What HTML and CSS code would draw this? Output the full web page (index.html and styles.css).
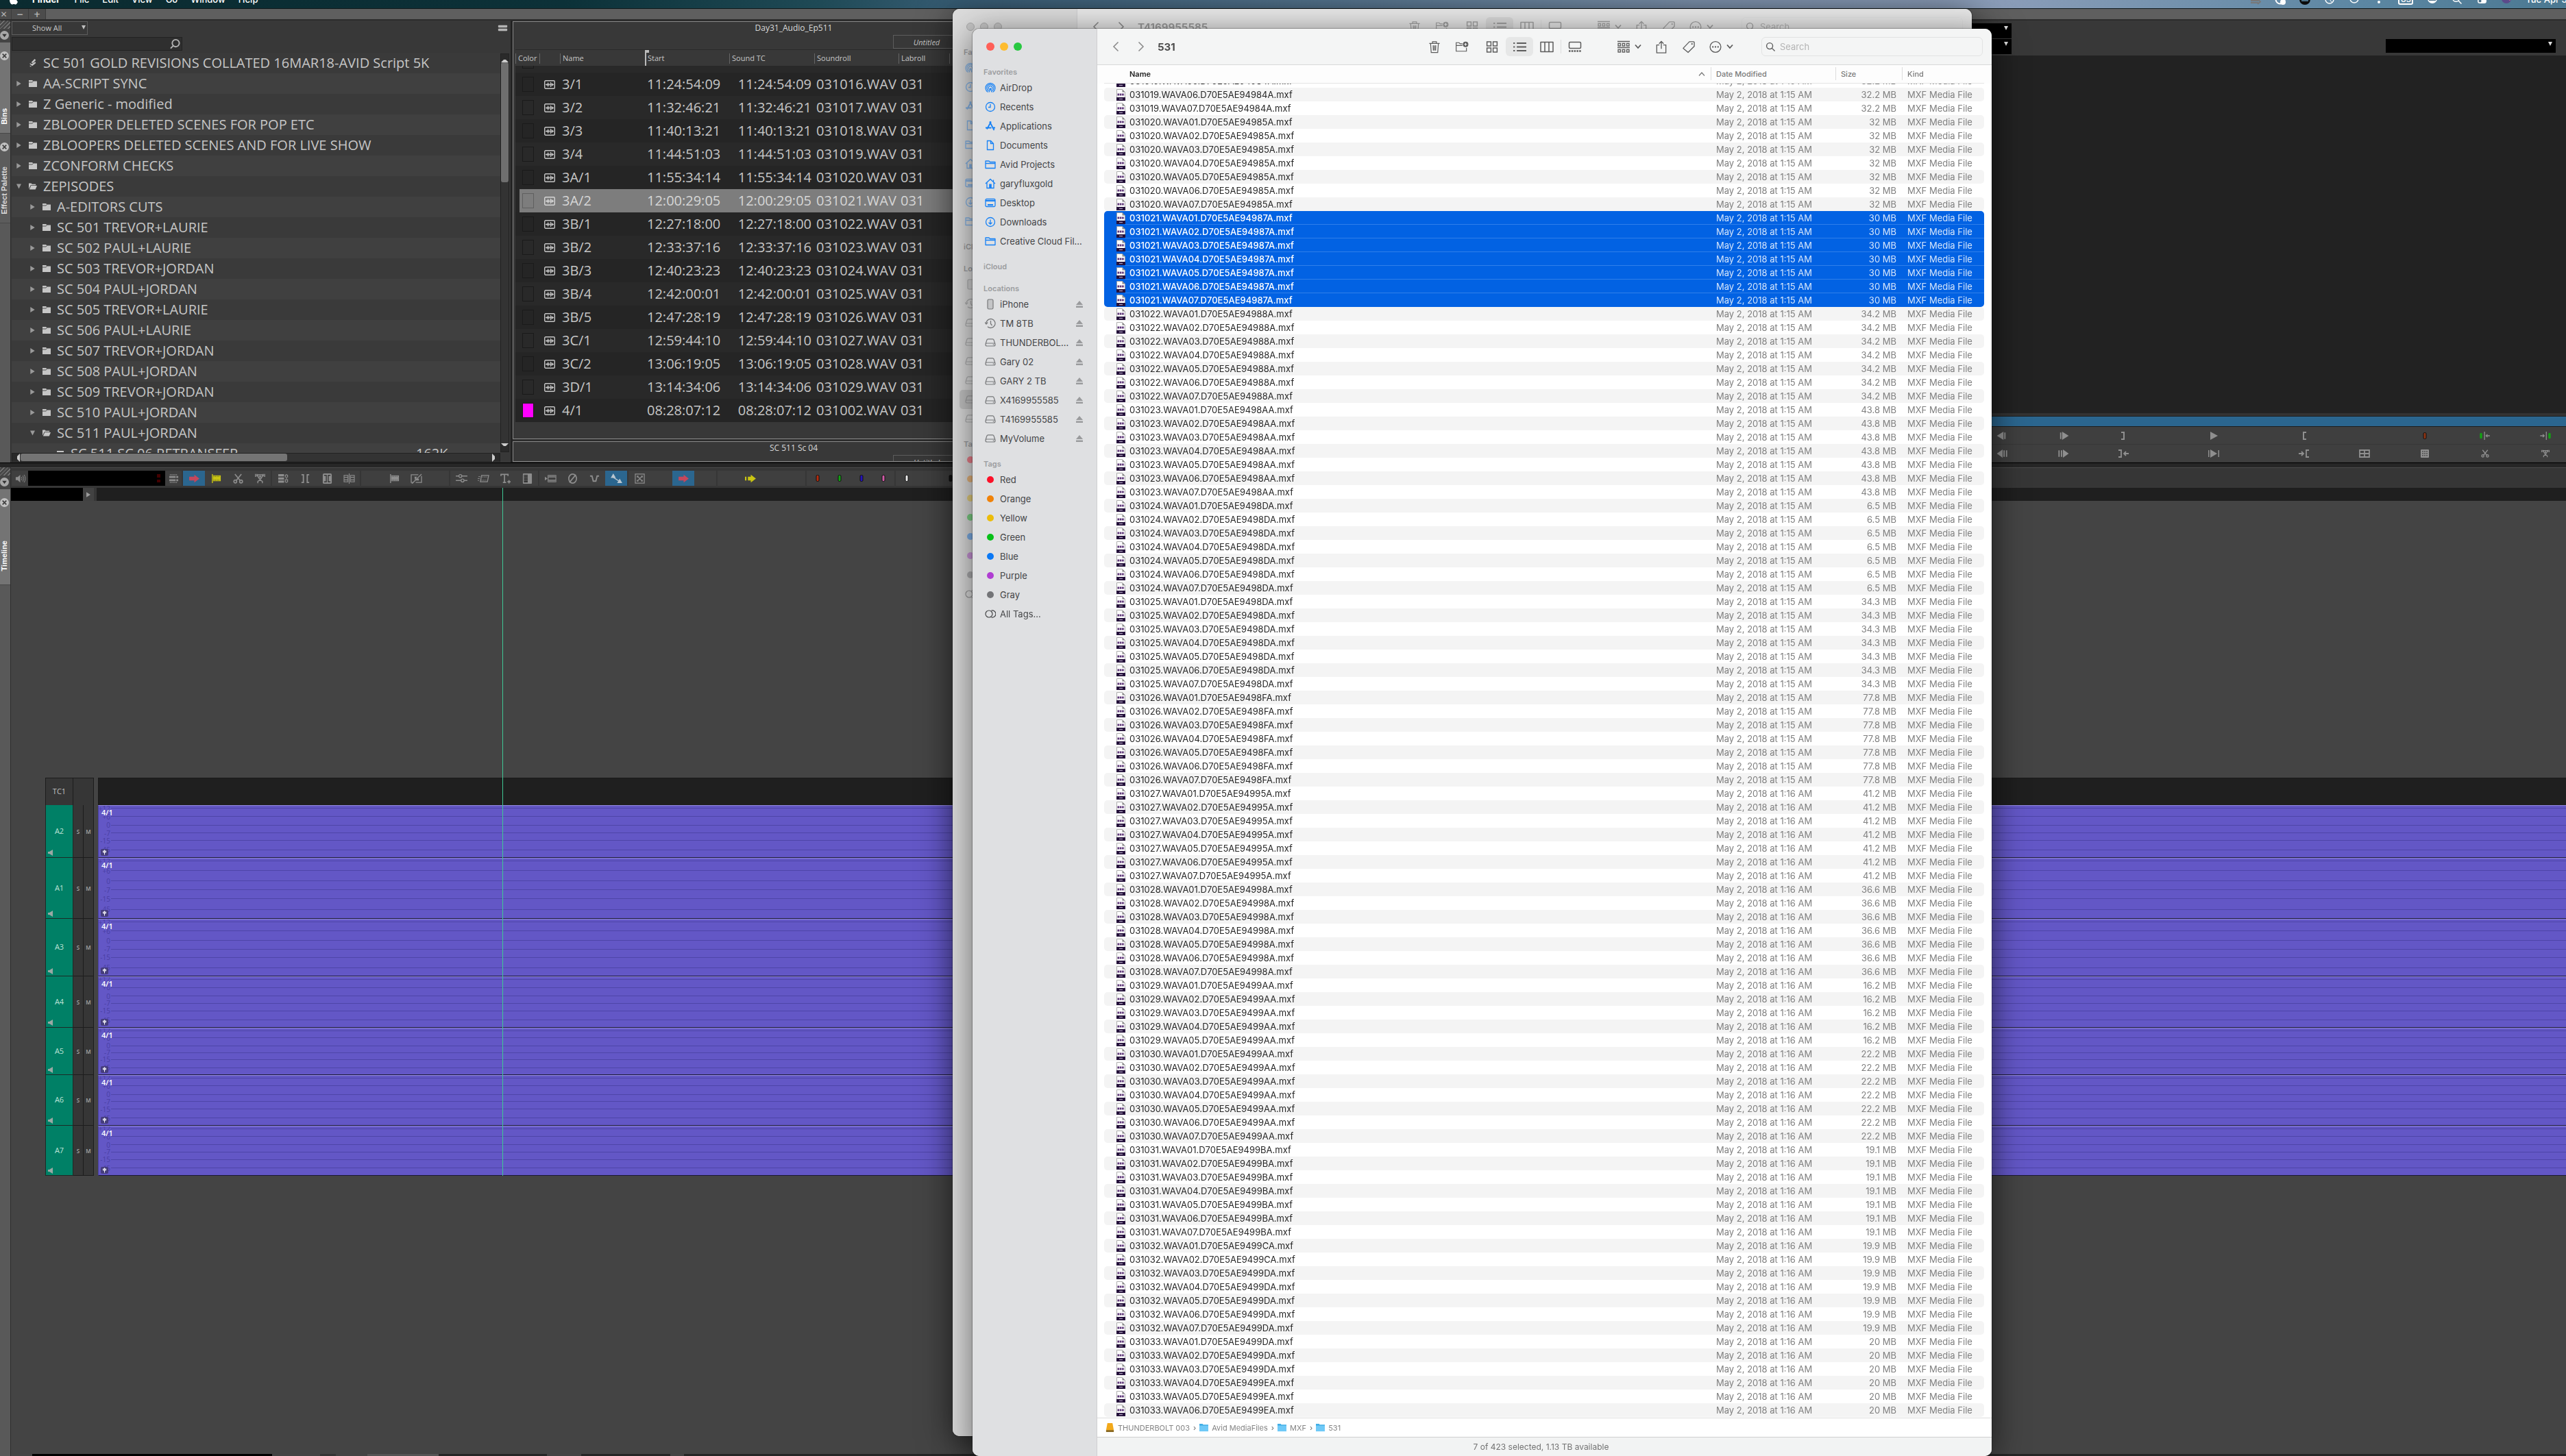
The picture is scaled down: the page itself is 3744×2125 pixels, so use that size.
FILE: index.html
```html
<!DOCTYPE html>
<html lang="en">
<head>
<meta charset="utf-8">
<title>Avid bins and Finder</title>
<link rel="stylesheet" href="styles.css">
</head>
<body>
<svg class="defs" aria-hidden="true">
  <symbol id="apple" viewBox="0 0 14 16"><path fill="currentColor" d="M10 1c0 1.500-1.300 3-2.700 3C7.100 2.500 8.500 1.100 10 1zM13 11.500C12.300 13.500 11 15.500 9.700 15.500c-1 0-1.300-.6-2.500-.6s-1.600.6-2.500.6C2.900 15.500 1 12 1 9c0-3 1.800-4.500 3.600-4.500 1.100 0 1.900.7 2.700.7s1.600-.8 3-.8c.9 0 2 .5 2.600 1.400-2.300 1.400-1.900 4.700.1 5.700z"/></symbol>
  <symbol id="close-c" viewBox="0 0 14 14"><circle cx="7" cy="7" r="7" fill="#c2c2c2"/><path d="M4 4l6 6M10 4l-6 6" stroke="#444" stroke-width="2"/></symbol>
  <symbol id="down-c" viewBox="0 0 14 14"><circle cx="7" cy="7" r="7" fill="#a8a8a8"/><path d="M3.500 5h7L7 10z" fill="#333"/></symbol>
  <symbol id="search" viewBox="0 0 16 16"><g fill="none" stroke="currentColor" stroke-width="1.500"><circle cx="6.500" cy="6.500" r="4.800"/><path d="M10 10l4.500 4.500"/></g></symbol>
  <symbol id="search-l" viewBox="0 0 16 16"><g fill="none" stroke="currentColor" stroke-width="2"><circle cx="9" cy="7" r="5.500"/><path d="M5 11l-4 4"/></g></symbol>
  <symbol id="menu2" viewBox="0 0 16 12"><rect width="16" height="4" rx="1" y="1" fill="currentColor"/><rect width="16" height="4" rx="1" y="7" fill="currentColor"/></symbol>
  <symbol id="script" viewBox="0 0 12 14"><path fill="currentColor" d="M9 0l2 2-5 5-3-1zM10 5l1 2-6 5-3-2zM1 7l3 2-1 1-2-1zM1 11l3 2H1z"/></symbol>
  <symbol id="folder-s" viewBox="0 0 12 10"><path fill="currentColor" d="M0 0h5l1.500 1.500H12V10H0z"/><path d="M0 3h5l1.500-1.300" stroke="#333" stroke-width=".8" fill="none"/></symbol>
  <symbol id="folder-o" viewBox="0 0 13 10"><path fill="currentColor" d="M0 0h4l1 1.500h6V3H3L0 9zM3.500 4H13l-2.500 6H1z"/></symbol>
  <symbol id="bin" viewBox="0 0 12 10"><path fill="currentColor" d="M1 1h10v2H1zM0 4h12v6H0z"/></symbol>
  <symbol id="tri-r" viewBox="0 0 8 10"><path fill="currentColor" d="M0 0l8 5-8 5z"/></symbol>
  <symbol id="tri-d" viewBox="0 0 8 8"><path fill="currentColor" d="M0 0h8L4 8z"/></symbol>
  <symbol id="wave" viewBox="0 0 16 13"><rect x=".7" y=".7" width="14.600" height="11.600" rx="1.500" fill="none" stroke="currentColor" stroke-width="1.400"/><path d="M2 6.500h12M4 5v3M5.500 3.500v6M7 4.500v4M9.500 3v7M11 4v5M12.500 5v3" stroke="currentColor" stroke-width="1.100"/></symbol>
  <symbol id="speaker" viewBox="0 0 16 16"><path fill="currentColor" d="M1 5.500h3L8 2v12l-4-3.500H1z"/><path d="M10 5.500q1.500 2.500 0 5M12 3.500q3 4.500 0 9M14 2q4 6 0 12" fill="none" stroke="currentColor"/></symbol>
  <symbol id="spk-mini" viewBox="0 0 8 9"><path fill="currentColor" d="M0 3h2l5-3v9L2 6H0z"/></symbol>
  <symbol id="filmstack" viewBox="0 0 16 16"><path d="M2 2h12M2 14h12" stroke="currentColor" stroke-dasharray="1 1" stroke-width="2"/><path fill="currentColor" d="M1 4h10v3H1zM1 9h10v3H1zM12 4h3v3h-3zM12 9h3v3h-3z"/></symbol>
  <symbol id="arrow-r" viewBox="0 0 16 14"><path d="M1 4.500h7V1.500L15 7l-7 5.500v-3H1z" fill="currentColor"/></symbol>
  <symbol id="arrow-d" viewBox="0 0 16 14"><path d="M4 4.500h4V1.500L15 7l-7 5.500v-3H4zM0 4.500h2v5H0z" fill="currentColor"/></symbol>
  <symbol id="flag" viewBox="0 0 16 16"><path d="M2 1v14" stroke="currentColor" stroke-width="1.500"/><rect x="3" y="3" width="12" height="9" fill="currentColor"/><path d="M4 4.500h10M4 10.500h10" stroke="#333" stroke-dasharray="1 1.500"/></symbol>
  <symbol id="scissors" viewBox="0 0 16 16"><g fill="none" stroke="currentColor" stroke-width="1.800"><circle cx="3.500" cy="12.500" r="2.200"/><circle cx="12.500" cy="12.500" r="2.200"/><path d="M3 1l8 10M13 1L5 11"/></g></symbol>
  <symbol id="lifter" viewBox="0 0 18 18"><g fill="none" stroke="currentColor" stroke-width="1.800"><path d="M1 1v5M3.500 1v4M14.500 1v4M17 1v5M3 2.500h12M4 3l3.500 6h3L14 3M9 8v4M5 17v-3l4-3 4 3v3"/></g><circle cx="9" cy="5.500" r="1.800" fill="currentColor"/></symbol>
  <symbol id="stack-link" viewBox="0 0 16 16"><path fill="currentColor" d="M0 1h9v3.500H0zM0 6h9v3.500H0zM0 11h9v3.500H0z"/><path d="M11 6V3q1.700-2 3.500 0v3M11 9v4q1.700 2 3.500 0V9M12.800 5v6" fill="none" stroke="currentColor" stroke-width="1.300"/></symbol>
  <symbol id="in-out" viewBox="0 0 16 16"><path d="M2 2h3v12H2M14 2h-3v12h3" fill="none" stroke="currentColor" stroke-width="2"/></symbol>
  <symbol id="in-out-b" viewBox="0 0 16 16"><rect x="1" y="0" width="14" height="16" rx="2" fill="currentColor"/><path d="M3 3h3.500v10H3M13 3H9.500v10H13" fill="none" stroke="#383838" stroke-width="1.500"/></symbol>
  <symbol id="film-split" viewBox="0 0 18 16"><g fill="none" stroke="currentColor" stroke-width="1.200"><rect x="1" y="3" width="6" height="10"/><rect x="11" y="3" width="6" height="10"/><path d="M9 0v16M1 6h6M1 10h6M11 6h6M11 10h6"/></g></symbol>
  <symbol id="no-film" viewBox="0 0 18 16"><g fill="none" stroke="currentColor" stroke-width="1.400"><path d="M12 2H1v12h4M8 14h9V4M2 16L17 1"/></g><path d="M6 5h4l-3 6zM9 8h4v3H8z" fill="currentColor"/></symbol>
  <symbol id="sliders" viewBox="0 0 18 16"><g fill="none" stroke="currentColor" stroke-width="1.500"><path d="M0 4h5M9 4h9M0 11h8M13 11h5"/><circle cx="7" cy="4" r="2.300"/><circle cx="10.500" cy="11" r="2.300"/></g></symbol>
  <symbol id="film-tilt" viewBox="0 0 18 16"><path d="M6 3h11l-2 10H4z" fill="none" stroke="currentColor" stroke-width="1.400"/><path d="M7 5.500h8M5.500 10.500h8" stroke="currentColor" stroke-dasharray="1.500 1"/><path d="M1 5h3M0 8h3M0 11h2" stroke="currentColor"/></symbol>
  <symbol id="title-t" viewBox="0 0 18 16"><path d="M2 4V1.500h11V4M7.500 1.500V14M5 14h5M12 13h5M14.500 10.500v5" fill="none" stroke="currentColor" stroke-width="1.800"/></symbol>
  <symbol id="dissolve" viewBox="0 0 16 16"><rect x="1" y="0" width="14" height="16" rx="1" fill="currentColor"/><rect x="2.500" y="2" width="6" height="12" fill="#333"/><path d="M3.500 3v10M5.500 3v10M7.500 3v10" stroke="currentColor" stroke-dasharray="1 1.500"/></symbol>
  <symbol id="film-in" viewBox="0 0 18 14"><path d="M0 4l4 3-4 3z" fill="currentColor"/><path d="M5 2h12v10H5zM5 4.500h12M5 9.500h12M8 2v2M11 2v2M14 2v2M8 10v2M11 10v2M14 10v2" fill="none" stroke="currentColor" stroke-width="1.200"/></symbol>
  <symbol id="slash-o" viewBox="0 0 16 16"><g fill="none" stroke="currentColor" stroke-width="1.800"><ellipse cx="8" cy="8" rx="6" ry="7"/><path d="M3 14L13 2"/></g></symbol>
  <symbol id="vee" viewBox="0 0 16 16"><path d="M1 4h3l2 8h4l2-8h3" fill="none" stroke="currentColor" stroke-width="2"/></symbol>
  <symbol id="curve" viewBox="0 0 18 16"><path fill="currentColor" d="M4 0l4 7H0zM14 8l4 7h-8z"/><path d="M4 6l9 6" stroke="currentColor" stroke-width="1.500"/></symbol>
  <symbol id="boxx" viewBox="0 0 16 16"><path d="M1 1h14v14H1zM4 4l8 8M12 4l-8 8M4 6V4h2M10 4h2v2M12 10v2h-2M6 12H4v-2" fill="none" stroke="currentColor" stroke-width="1.300"/></symbol>
  <symbol id="marker" viewBox="0 0 6 10"><rect x="1" y=".5" width="4" height="9" rx="1.500" fill="currentColor" stroke="#111"/></symbol>
  <symbol id="step-b" viewBox="0 0 14 10"><path fill="currentColor" d="M8 0v10L0 5zM9 1h1.500v8H9z"/></symbol>
  <symbol id="step-f" viewBox="0 0 14 10"><path fill="currentColor" d="M6 0v10l8-5zM3.500 1H5v8H3.500z"/></symbol>
  <symbol id="step-b2" viewBox="0 0 14 10"><path fill="currentColor" d="M7 0v10L0 5zM8 1h1.500v8H8zM11 1h1.500v8H11z"/></symbol>
  <symbol id="step-f2" viewBox="0 0 14 10"><path fill="currentColor" d="M7 0v10l7-5zM4.500 1H6v8H4.500zM1.500 1H3v8H1.500z"/></symbol>
  <symbol id="play" viewBox="0 0 12 12"><path fill="currentColor" d="M1 0l11 6-11 6z"/></symbol>
  <symbol id="play-io" viewBox="0 0 16 12"><path fill="currentColor" d="M0 1h1.500v10H0zM14.500 1H16v10h-1.500zM3 0l10 6-10 6z"/></symbol>
  <symbol id="brk-r" viewBox="0 0 8 12"><path d="M1 1h4v10H1" fill="none" stroke="currentColor" stroke-width="2"/></symbol>
  <symbol id="brk-l" viewBox="0 0 8 12"><path d="M7 1H3v10h4" fill="none" stroke="currentColor" stroke-width="2"/></symbol>
  <symbol id="brk-r-in" viewBox="0 0 16 12"><path d="M1 1h4v10H1M16 6H9M12 3L9 6l3 3" fill="none" stroke="currentColor" stroke-width="1.800"/></symbol>
  <symbol id="brk-l-in" viewBox="0 0 16 12"><path d="M15 1h-4v10h4M0 6h7M4 3l3 3-3 3" fill="none" stroke="currentColor" stroke-width="1.800"/></symbol>
  <symbol id="quad" viewBox="0 0 16 12"><path d="M1 1h14v10H1zM8 1v10M1 6h14" fill="none" stroke="currentColor" stroke-width="1.800"/></symbol>
  <symbol id="calc" viewBox="0 0 12 12"><rect width="12" height="12" rx="1" fill="currentColor"/><path d="M3 2v8M6 2v8M9 2v8" stroke="#3f3f3f" stroke-width="1.500" stroke-dasharray="1.500 1.500"/></symbol>
  <symbol id="trim-l" viewBox="0 0 18 14"><rect x="0" y="2" width="4" height="10" rx="2" fill="#14a014"/><path d="M8 0v14M17 7h-6M13 4.500L10.500 7l2.500 2.500" fill="none" stroke="currentColor" stroke-width="1.500"/></symbol>
  <symbol id="trim-r" viewBox="0 0 18 14"><rect x="14" y="2" width="4" height="10" rx="2" fill="#14a014"/><path d="M10.500 0v14M0 7h7M4.500 4.500L7 7 4.500 9.500" fill="none" stroke="currentColor" stroke-width="1.500"/></symbol>
  <symbol id="vol" viewBox="0 0 11 10"><rect width="11" height="10" rx="2" fill="#453d7c"/><path d="M5.500 1.500v7M3.500 3h4v2h-4z" fill="none" stroke="#fff"/></symbol>

  <symbol id="airdrop" viewBox="0 0 16 16"><g fill="none" stroke="currentColor" stroke-width="1.200"><path d="M4.500 14.500a7 7 0 1 1 7 0M5.500 12.500a5 5 0 1 1 5 0M6.500 10.500a2.800 2.800 0 1 1 3 0"/><path d="M8 8.500l-2 6M8 8.500l2 6"/></g></symbol>
  <symbol id="clock" viewBox="0 0 16 16"><g fill="none" stroke="currentColor" stroke-width="1.300"><circle cx="8" cy="8" r="6.500"/><path d="M8 4v4.500H5"/></g></symbol>
  <symbol id="apps" viewBox="0 0 16 16"><path d="M7 1.500l6.500 12.500M9 1.500L3 12.500M1 10.500h8.500M11.500 10.500H15" fill="none" stroke="currentColor" stroke-width="1.800"/></symbol>
  <symbol id="doc" viewBox="0 0 16 16"><path d="M3.500 1.500h5l4 4v9h-9zM8.500 1.500v4h4" fill="none" stroke="currentColor" stroke-width="1.300"/></symbol>
  <symbol id="folder" viewBox="0 0 16 16"><path d="M1 3h5l1.500 1.500H15v9H1zM1 6.500h14" fill="none" stroke="currentColor" stroke-width="1.300" stroke-linejoin="round"/></symbol>
  <symbol id="home" viewBox="0 0 16 16"><path d="M1 8l7-6.500L15 8M3 6.500v8h10v-8M12.500 5V2.500" fill="none" stroke="currentColor" stroke-width="1.300"/><rect x="6.200" y="8.500" width="3.600" height="6" fill="currentColor"/></symbol>
  <symbol id="desktop" viewBox="0 0 16 16"><rect x="1" y="2.500" width="14" height="11" rx="1.500" fill="none" stroke="currentColor" stroke-width="1.300"/><path d="M1 5h14M4 11h8" stroke="currentColor" stroke-width="1.800"/></symbol>
  <symbol id="download" viewBox="0 0 16 16"><g fill="none" stroke="currentColor" stroke-width="1.300"><circle cx="8" cy="8" r="6.500"/><path d="M8 4.500v6.500M5.500 8.700L8 11l2.500-2.300"/></g></symbol>
  <symbol id="phone" viewBox="0 0 16 16"><rect x="4" y="1" width="8" height="14" rx="1.800" fill="#c4c5c7" stroke="currentColor" stroke-width="1.200"/></symbol>
  <symbol id="tm" viewBox="0 0 16 16"><g fill="none" stroke="currentColor" stroke-width="1.300"><path d="M2 8a6.500 6.500 0 1 1 2 4.700M8.500 4v4.500l2 2.500"/><path d="M0 6.500L2 9l2.200-2.500"/></g></symbol>
  <symbol id="drive" viewBox="0 0 16 16"><path d="M1 10l2-6q.4-1.200 1.600-1.200h6.800Q12.600 2.800 13 4l2 6M1 11q0-2 2-2h10q2 0 2 2t-2 2H3q-2 0-2-2z" fill="none" stroke="currentColor" stroke-width="1.200"/><circle cx="12.500" cy="11" r=".8" fill="currentColor"/></symbol>
  <symbol id="alltags" viewBox="0 0 16 16"><g fill="none" stroke="currentColor" stroke-width="1.200"><circle cx="6" cy="8" r="5"/><path d="M9.500 3.200a5 5 0 1 1 0 9.600"/></g></symbol>
  <symbol id="dot" viewBox="0 0 16 16"><circle cx="8" cy="8" r="5" fill="currentColor"/></symbol>
  <symbol id="eject" viewBox="0 0 10 10"><path d="M5 0l5 6H0zM0 7.500h10V10H0z" fill="currentColor"/></symbol>
  <symbol id="back" viewBox="0 0 10 16"><path d="M8.500 1.500L2 8l6.500 6.500" fill="none" stroke="currentColor" stroke-width="1.600"/></symbol>
  <symbol id="fwd" viewBox="0 0 10 16"><path d="M1.500 1.500L8 8l-6.500 6.500" fill="none" stroke="currentColor" stroke-width="1.600"/></symbol>
  <symbol id="chev" viewBox="0 0 10 8"><path d="M1 1.500l4 4.500 4-4.500" fill="none" stroke="currentColor" stroke-width="1.800"/></symbol>
  <symbol id="caret" viewBox="0 0 10 8"><path d="M1 6.500L5 2l4 4.500" fill="none" stroke="currentColor" stroke-width="1.200"/></symbol>
  <symbol id="trash" viewBox="0 0 20 20"><path d="M2 4.500h16M7 4.500V2h6v2.500M4 4.500l1 14h10l1-14M8 7.500l.3 8M12 7.500l-.3 8M10 7.500v8" fill="none" stroke="currentColor" stroke-width="1.300"/></symbol>
  <symbol id="newfolder" viewBox="0 0 24 20"><path d="M13 4.500H9L7 2.500H2v15h18v-6M2 7.500h11" fill="none" stroke="currentColor" stroke-width="1.400"/><circle cx="18.500" cy="5.500" r="4.800" fill="currentColor"/><path d="M18.500 3v5M16 5.500h5" stroke="#f4f4f4" stroke-width="1.400"/></symbol>
  <symbol id="grid4" viewBox="0 0 18 18"><path d="M2 2h5.500v5.500H2zM10.500 2H16v5.500h-5.500zM2 10.500h5.500V16H2zM10.500 10.500H16V16h-5.500z" fill="none" stroke="currentColor" stroke-width="1.400"/></symbol>
  <symbol id="list" viewBox="0 0 18 14"><path d="M5.500 2H18M5.500 7H18M5.500 12H18M1 2h2M1 7h2M1 12h2" stroke="currentColor" stroke-width="1.700"/></symbol>
  <symbol id="cols" viewBox="0 0 20 16"><path d="M1 1h18v14H1zM7 1v14M13 1v14" fill="none" stroke="currentColor" stroke-width="1.500" stroke-linejoin="round"/></symbol>
  <symbol id="gallery" viewBox="0 0 20 16"><rect x="1.500" y="1" width="17" height="9" rx="1.500" fill="none" stroke="currentColor" stroke-width="1.500"/><path d="M1 14h18" stroke="currentColor" stroke-width="2.500" stroke-dasharray="2.500 1.300"/></symbol>
  <symbol id="group" viewBox="0 0 20 18"><path d="M1 1h18M1 10h18M2 4h3.500v3.500H2zM8.200 4h3.500v3.500H8.200zM14.500 4H18v3.500h-3.500zM2 13h3.500v3.500H2zM8.200 13h3.500v3.500H8.200zM14.500 13H18v3.500h-3.500z" fill="none" stroke="currentColor" stroke-width="1.300"/></symbol>
  <symbol id="share" viewBox="0 0 18 20"><path d="M6 7H2v12h14V7h-4M9 13V1.500M5.500 5L9 1.500 12.500 5" fill="none" stroke="currentColor" stroke-width="1.400"/></symbol>
  <symbol id="tag" viewBox="0 0 20 20"><path d="M11 2h6.500q1 0 1 1v6L9 18.500 1.500 12z" fill="none" stroke="currentColor" stroke-width="1.400" stroke-linejoin="round"/><circle cx="15" cy="5.500" r="1.200" fill="currentColor"/></symbol>
  <symbol id="more" viewBox="0 0 20 20"><circle cx="10" cy="10" r="8.300" fill="none" stroke="currentColor" stroke-width="1.400"/><g fill="currentColor"><circle cx="6" cy="10" r="1.200"/><circle cx="10" cy="10" r="1.200"/><circle cx="14" cy="10" r="1.200"/></g></symbol>
  <symbol id="mxf" viewBox="0 0 13 17"><path d="M.5.500h8l4 4v12H.5z" fill="#fff" stroke="#999" stroke-width=".8"/><path d="M8.500.5v4h4z" fill="#888"/><rect y="12" width="13" height="5" fill="#24103a"/><path d="M1.500 8h10" stroke="#5d3577" stroke-width="3" stroke-dasharray="2.600 .7"/><path d="M4 14.500h5" stroke="#a99bb8" stroke-width="1.300"/></symbol>
  <symbol id="disk" viewBox="0 0 14 14"><path d="M3 0h8l2 11v3H1v-3z" fill="#f2a91b"/><path d="M1 11h12v3H1z" fill="#8a6a25"/></symbol>
  <symbol id="bluefolder" viewBox="0 0 14 14"><path d="M0 1h5l1 1.500h8V13H0z" fill="#42aee6"/><path d="M0 4h14v9H0z" fill="#6fc9f7"/></symbol>
</svg>

<div class="app">
  <nav class="menubar" aria-label="Menu bar">
    <div class="menus">
      <svg class="apple"><use href="#apple"/></svg>
      <button class="b">Finder</button><button>File</button><button>Edit</button><button>View</button><button>Go</button><button>Window</button><button>Help</button>
    </div>
    <div class="status">
      <svg viewBox="0 0 16 16"><path d="M1 10h11M1 13h11M11 8l4 3.500-4 3.500" stroke="#777" fill="none" stroke-width="2"/></svg>
      <svg viewBox="0 0 16 16"><circle cx="8" cy="8" r="6.500" fill="none" stroke="#fff" stroke-width="2"/><circle cx="12" cy="12" r="4" fill="#fff"/></svg>
      <svg viewBox="0 0 16 16"><circle cx="8" cy="8" r="8" fill="#0c0c0c"/><path d="M3 10h10" stroke="#4a7088" stroke-width="2"/></svg>
      <svg viewBox="0 0 16 16"><circle cx="8" cy="8" r="6" fill="none" stroke="#fff" stroke-width="1.500"/><path d="M8 4v4l3 4" stroke="#fff" fill="none"/></svg>
      <svg viewBox="0 0 16 16"><circle cx="8" cy="7" r="6" fill="none" stroke="#fff" stroke-width="1.500"/><path d="M8 7l4-4" stroke="#fff"/></svg>
      <svg viewBox="0 0 16 16"><circle cx="8" cy="12" r="2" fill="#fff"/><path d="M3 7q5-5 10 0" stroke="#fff" fill="none" stroke-width="2"/></svg>
      <span class="us">US</span>
      <svg viewBox="0 0 16 16"><circle cx="8" cy="7" r="7" fill="#fff"/><path d="M3 9h10" stroke="#4a7088" stroke-width="2"/></svg>
      <svg><use href="#search"/></svg>
      <svg viewBox="0 0 16 16"><rect x="2" y="7" width="13" height="7" rx="3.500" fill="#fff"/><circle cx="5.500" cy="10.500" r="2" fill="#4a7088"/></svg>
      <svg viewBox="0 0 16 16"><circle cx="8" cy="7" r="7" fill="#5b4a8a"/><path d="M2 8q6-5 12 1" stroke="#e96f8f" stroke-width="3" fill="none"/></svg>
      <span class="date">Tue Apr 30</span>
    </div>
  </nav>
  <div class="strip"><button aria-label="Close">✕</button><button aria-label="Collapse">−</button><button aria-label="Expand">+</button></div>

  <div class="workspace">
    <aside class="rail">
      <div class="hatch"></div>
      <div class="railtop"><svg><use href="#down-c"/></svg></div>
      <div class="tab tab-on"><svg><use href="#close-c"/></svg><span>Bins</span></div>
      <div class="tab tab-fx"><svg><use href="#close-c"/></svg><span>Effect Palette</span></div>
    </aside>
    <section class="bins">
      <div class="binhead">
        <span class="sel"><select aria-label="Show"><option>Show All</option></select></span>
        <button class="ham" aria-label="Panel menu"><svg><use href="#menu2"/></svg></button>
      </div>
      <div class="binsearch"><input type="text" aria-label="Search bins"><svg><use href="#search-l"/></svg></div>
      <div class="binbody">
        <ul class="tree" id="tree"></ul>
        <div class="vbar"><i class="up"></i><b></b><i class="dn"></i></div>
      </div>
      <div class="hbar"><i class="lf"></i><b></b><i class="rt"></i></div>
    </section>
    <div class="split"></div>
    <section class="audio">
      <div class="frame frame1">
        <h2>Day31_Audio_Ep511</h2>
        <div class="view"><select aria-label="Bin view"><option>Untitled</option></select></div>
        <div class="clips" id="clips">
          <table>
            <colgroup><col class="c1"><col class="c2"><col class="c3"><col class="c4"><col class="c5"><col class="c6"><col class="c7"><col></colgroup>
            <thead><tr><th>Color</th><th></th><th>Name</th><th class="sorted">Start</th><th>Sound TC</th><th>Soundroll</th><th>Labroll</th><th></th></tr></thead>
            <tbody id="cliprows"></tbody>
          </table>
        </div>
      </div>
      <div class="frame frame2">
        <h2>SC 511 Sc 04</h2>
        <div class="view"><select aria-label="Sequence view"><option>Untitled</option></select></div>
      </div>
    </section>
    <section class="monitor">
      <div class="monhead">
        <div class="tcs"><div class="tc"></div><div class="tc"></div></div>
        <div class="tc tc-wide"></div>
      </div>
      <div class="screen"></div>
      <div class="posbar"></div>
      <div class="transport" id="transport"></div>
    </section>
  </div>
  <div class="seam"></div>

  <div class="timeline">
    <aside class="rail rail2">
      <div class="hatch"></div>
      <div class="railtop"><svg><use href="#down-c"/></svg></div>
      <div class="tab tab-on"><svg><use href="#close-c"/></svg><span>Timeline</span></div>
    </aside>
    <section class="tl">
      <div class="tools" id="tools"></div>
      <div class="ruler"><div class="tcbox"></div><button aria-label="Open track panel"><svg><use href="#tri-r"/></svg></button><div class="rule"></div></div>
      <div class="tracks" id="tracks">
        <div class="track tctrack"><div class="lab">TC1</div><div class="lab2"></div><div class="lane"></div></div>
      </div>
      <div class="foot"><i></i><i></i><i></i><i></i><i></i><i></i></div>
      <div class="playhead"></div>
    </section>
  </div>
</div>

<section class="win win-back" id="winback" aria-label="T4169955585"></section>
<section class="win win-front" id="winfront" aria-label="531"></section>
<script src="app.js"></script>
</body>
</html>
```
FILE: styles.css
```css
* { box-sizing: border-box; }
body { margin: 0; position: relative; min-height: 100vh; overflow: hidden; background: #444; font-family: "Open Sans", "Noto Sans", sans-serif; color: #c6c6c6; }
button, select, input { font: inherit; color: inherit; background: none; border: 0; padding: 0; margin: 0; border-radius: 0; }
select { appearance: none; }
svg { display: block; flex: none; }
.defs { display: none; }
a { color: inherit; text-decoration: none; }
ul { list-style: none; margin: 0; padding: 0; }
h2 { margin: 0; font-weight: 400; }

.app { display: flex; flex-direction: column; min-height: 100vh; isolation: isolate; }

/* menu bar */
.menubar { height: 13px; border-bottom: 1px solid #10181a; display: flex; justify-content: space-between; align-items: flex-end; overflow: hidden; color: #fff; font: 500 13px/18px Inter, sans-serif; background: linear-gradient(90deg, #0b2b30 0, #0c3138 22%, #1f4a56 32%, #3a5f78 38%, #567690 52%, #7d92ad 66%, #8b9db8 78%, #5c87a3 92%, #4b7891 100%); }
.menus, .status { display: flex; align-items: center; height: 18px; margin-bottom: 4px; white-space: nowrap; }
.apple { width: 14px; height: 16px; margin: 0 20px 0 13px; }
.menus button { margin-right: 19px; }
.menus .b { font-weight: 700; margin-right: 21px; }
.status { gap: 20px; margin-right: -10px; }
.status svg { width: 16px; height: 16px; }
.status .us { border: 2px solid #fff; border-radius: 3px; font-size: 11px; line-height: 12px; width: 22px; text-align: center; }

.strip { height: 17px; background: #5f5f5f; border-bottom: 2px solid #2c2c2c; display: flex; }
.strip button { width: 25px; border-right: 1px solid #3c3c3c; background: #4c4c4c; color: #b5b5b5; font: 700 12px/14px "DejaVu Sans", sans-serif; }
.strip button:first-child { width: 17px; padding-right: 5px; }

.workspace { display: flex; height: 645px; background: #383838; }
.rail { width: 16px; flex: none; background: #595959; border-right: 1px solid #2d2d2d; overflow: hidden; }
.hatch { height: 12px; background: repeating-linear-gradient(135deg, #777 0 1px, #484848 1px 4px); }
.railtop { height: 20px; background: #444; padding-top: 3px; }
.rail svg { width: 13px; height: 13px; }
.tab { display: flex; flex-direction: column; justify-content: space-between; background: #5c5c5c; border-bottom: 1px solid #484848; padding: 13px 0 12px; height: 133px; color: #dcdcdc; }
.tab-on { background: #747474; color: #fff; }
.tab-fx { height: 131px; }
.tab span { writing-mode: vertical-rl; transform: rotate(180deg); font: 700 11px/12px "Liberation Sans", sans-serif; }
.rail2 .tab { height: 140px; padding-bottom: 20px; }

/* bins */
.bins { width: 729px; flex: none; display: flex; flex-direction: column; background: #383838; padding: 1px 2px 1px 1px; }
.binhead { display: flex; justify-content: space-between; height: 20px; }
.sel { width: 111px; border: 1px solid #5d5d5d; position: relative; display: block; }
.sel select { width: 100%; padding-left: 29px; font-size: 11px; line-height: 17px; display: block; }
.sel::after, .tc::after { content: ""; position: absolute; right: 2px; top: 5px; border: 3px solid transparent; border-top: 6px solid #c0c0c0; border-bottom: 0; }
.ham { width: 19px; color: #b4b4b4; }
.ham svg { width: 15px; height: 10px; margin: 0 2px; }
.binsearch { margin-top: 3px; width: 249px; height: 20px; border: 1px solid #222; background: #2f2f2f; display: flex; align-items: center; color: #b4b4b4; }
.binsearch input { flex: 1; min-width: 0; }
.binsearch svg { width: 15px; height: 16px; margin-right: 2px; }
.binbody { display: flex; flex: 1; min-height: 0; margin-top: 3px; }
.tree { flex: 1; overflow: hidden; font-size: 20px; line-height: 30px; }
.tree li { display: flex; align-items: center; height: 30px; padding-left: 7px; background: #3a3a3a; white-space: nowrap; }
.tree li:nth-child(even) { background: #404040; }
.tree .l1 { padding-left: 27px; }
.tree .l2 { padding-left: 47px; }
.tree svg { margin-right: 9px; }
.tree .tri { width: 7px; height: 8px; margin-right: 11px; color: #9a9a9a; }
.tree .ic { width: 12px; height: 12px; }
.tree .size { margin-left: auto; width: 123px; }
.vbar { width: 13px; margin: 1px 0; background: #333; border: 1px solid #222; display: flex; flex-direction: column; }
.vbar b { flex: none; height: 175px; background: #6f6f6f; border-radius: 3px; margin-bottom: auto; }
.vbar i, .hbar i { width: 11px; height: 12px; flex: none; border: 4px solid transparent; background: #2a2a2a; }
.vbar .up { border-bottom-color: #ccc; border-top-width: 2px; }
.vbar .dn { border-top-color: #ccc; border-bottom-width: 2px; }
.hbar { width: 713px; height: 13px; background: #333; border: 1px solid #222; display: flex; }
.hbar b { width: 389px; background: #747474; border-radius: 3px; margin: 0 auto 0 1px; }
.hbar .lf { border-right-color: #ccc; border-left-width: 2px; }
.hbar .rt { border-left-color: #ccc; border-right-width: 2px; }
.split { width: 3px; background: #232323; }

/* audio bin */
.audio { width: 820px; flex: none; padding-top: 1px; display: flex; flex-direction: column; gap: 3px; background: #2c2c2c; }
.frame { border: 1px solid #8a8a8a; background: #383838; padding: 0 3px; overflow: hidden; }
.frame1 { height: 610px; }
.frame2 { height: 30px; }
.frame h2 { font-size: 12px; line-height: 17px; text-align: center; color: #d8d8d8; }
.view { height: 21px; margin: 2px 0 0 551px; }
.view select { width: 98px; height: 20px; border: 1px solid #5d5d5d; font-size: 11px; font-style: italic; text-align-last: center; display: block; }
.clips { height: 544px; overflow: auto; scrollbar-width: none; background: #262626; }
.clips table { border-collapse: separate; border-spacing: 0; table-layout: fixed; width: 100%; }
.clips th { position: sticky; top: 0; z-index: 1; height: 24px; background: #383838; border-top: 1px solid #2a2a2a; font-weight: 400; font-size: 11px; text-align: left; padding: 0 4px; background-image: linear-gradient(#666, #666); background-size: 1px 15px; background-position: 0 5px; background-repeat: no-repeat; }
.clips th.sorted { background-image: linear-gradient(#bbb, #bbb), linear-gradient(#bbb, #bbb); background-size: 2px 23px, 6px 4px; background-position: 0 0, 0 0; }
.clips td { height: 34px; padding: 0 4px 0 3px; font-size: 20px; line-height: 34px; white-space: nowrap; background: #252525; }
.clips tr:nth-child(odd) td { background: #292929; }
.clips tr.on td { background: #7d7d7d; color: #d6d6d6; }
.clips td:nth-child(5) { text-align: right; }
.clips td svg { width: 16px; height: 13px; margin-left: 4px; }
.clips td:first-child { padding-left: 10px; }
.clips tr.on td:first-child { border-left: 6px solid #262626; padding-left: 4px; }
.chip { display: block; width: 17px; height: 22px; border: 1px solid #1a1a1a; }
.on .chip { border-color: #5f5f5f; }
.chip.mag { background: #f0f; }
.c1 { width: 35px; } .c2 { width: 30px; } .c3 { width: 124px; } .c4 { width: 123px; } .c5 { width: 124px; } .c6 { width: 123px; } .c7 { width: 74px; }

/* record monitor */
.monitor { flex: 1; min-width: 0; display: flex; flex-direction: column; overflow: hidden; }
.monhead { height: 51px; display: flex; justify-content: space-between; padding: 4px 15px 0 0; }
.tcs { width: 1367px; display: flex; flex-direction: column; gap: 1px; }
.tc { height: 22px; background: #000; position: relative; }
.tc::after { right: 5px; top: 4px; border-top-color: #ddd; }
.tc-wide { width: 248px; height: 20px; margin-top: 23px; }
.screen { flex: 1; background: #222; border-bottom: 4px solid #333; }
.posbar { height: 16px; background: #2b668f; border: 1px solid #1d1d1d; border-width: 1px 0; }
.transport { height: 52px; background: #3f3f3f; display: flex; flex-direction: column; color: #8f8f8f; }
.trow { display: flex; justify-content: flex-end; height: 25px; margin-right: -14px; margin-top: 1px; border-bottom: 1px solid #383838; }
.trow button { width: 88px; flex: none; display: flex; align-items: center; justify-content: center; }
.trow .wide { width: 176px; }
.trow svg { width: 18px; height: 12px; }
.mk-btn { color: #8c3414; }
.seam { height: 7px; background: #262626; border-top: 1px solid #000; }

/* timeline */
.timeline { flex: 1; display: flex; min-height: 0; }
.tl { flex: 1; min-width: 0; display: flex; flex-direction: column; position: relative; overflow: hidden; }
.tools { height: 30px; flex: none; background: #363636; border-top: 1px solid #4a4a4a; padding: 4px 0 0 1px; display: flex; gap: 2px; color: #8d8d8d; }
.tgroup { display: flex; height: 22px; background: #3f3f3f; }
.tgroup button { width: 32px; display: flex; align-items: center; justify-content: center; }
.tgroup button.hot { background: #2b668f; }
.tgroup svg { width: 17px; height: 15px; }
.tgroup .mk, .trow .mk { width: 6px; height: 10px; }
.tgroup.first button { width: 24px; }
.meter { width: 200px; background: #000; display: flex; flex-direction: column; align-items: flex-end; gap: 3px; padding: 5px 7px; }
.meter i { width: 5px; height: 5px; background: #400; }
.red { color: #c4475c; } .yel { color: #c9c413; } .pale { color: #b9c6cf; }
.ruler { display: flex; height: 19px; flex: none; background: #363636; }
.tcbox { width: 105px; background: #000; }
.ruler button { width: 16px; background: #424242; color: #9a9a9a; display: flex; align-items: center; justify-content: center; }
.ruler button svg { width: 6px; height: 8px; }
.rule { flex: 1; margin-left: 4px; background: #1f1f1f; }
.tracks { margin: 404px 0 auto 50px; display: flex; flex-direction: column; }
.track { display: flex; }
.tctrack { height: 40px; font-size: 11px; color: #c0c0c0; }
.lab, .lab2 { background: #363636; border: 1px solid #1c1c1c; border-bottom: 0; display: flex; align-items: center; justify-content: center; }
.lab { width: 41px; padding-bottom: 2px; }
.lab2 { width: 30px; border-left: 0; }
.lane { flex: 1; min-width: 0; margin-left: 6px; background: #1f1f1f; border: 1px solid #1a1a1a; border-right: 0; }
.head { width: 41px; background: #008066; border: 1px solid #1c2a26; border-width: 0 1px 1px; position: relative; color: #bfe3d8; font-size: 11px; display: flex; align-items: center; justify-content: center; padding-bottom: 2px; }
.head svg { position: absolute; left: 3px; bottom: 2px; width: 8px; height: 9px; color: #9aa8a4; }
.sm { width: 15px; background: #363636; border: 1px solid #1c1c1c; border-width: 0 1px 1px 0; font-size: 8px; font-weight: 600; color: #a8a8a8; }
.clip { flex: 1; min-width: 0; margin-left: 6px; background: #6357c6; border-top: 1px solid #9189d8; border-bottom: 1px solid #1b1838; border-left: 1px solid #4a41a0; position: relative; overflow: hidden; }
.clip .name { position: absolute; left: 4px; top: 3px; font-size: 11px; line-height: 14px; font-weight: 600; color: #fff; z-index: 1; }
.clip .lv { position: absolute; left: 0; right: 0; height: 1px; display: flex; align-items: center; gap: 1px; font-size: 10px; line-height: 10px; color: #493fa4; }
.clip .lv b { font-weight: 400; width: 17px; display: flex; justify-content: flex-end; flex: none; }
.clip .lv::after { content: ""; flex: 1; height: 1px; background: #4e45a8; }
.clip svg { position: absolute; left: 3px; bottom: 2px; width: 11px; height: 10px; }
.foot { height: 3px; flex: none; display: flex; margin-left: 31px; }
.foot i { background: #262626; width: 130px; margin-right: 20px; }
.foot i:nth-child(1) { width: 350px; background: #000; margin-right: 70px; }
.foot i:nth-child(2) { width: 23px; background: #353535; margin-right: 46px; }
.foot i:nth-child(3) { width: 104px; background: #555; margin-right: 0; }
.foot i:nth-child(4) { width: 158px; margin-right: 50px; }
.foot i:nth-child(6) { flex: 1; margin-right: 0; }
.playhead { position: absolute; left: 717px; top: 30px; width: 1px; height: 1004px; background: #3fc794; }

/* Finder windows */
.win { position: absolute; display: flex; border-radius: 10px; overflow: hidden; font-family: Inter, sans-serif; background: #fff; color: #262626; box-shadow: 0 0 1px 1px rgba(0,0,0,.25), 0 8px 50px rgba(0,0,0,.55); isolation: isolate; }
.win-back { left: 1390px; top: 13px; width: 1487px; height: 2083px; }
.win-front { left: 1419px; top: 42px; width: 1487px; height: 2083px; }
.side { width: 182px; flex: none; background: #dfe0e2; border-right: 1px solid #cfcfd1; color: #444547; font-size: 13px; }
.lights { display: flex; gap: 8px; padding: 20px 0 0 20px; height: 54px; }
.lights i { width: 12px; height: 12px; border-radius: 50%; background: #ff5f57; }
.lights i:nth-child(2) { background: #febc2e; }
.lights i:nth-child(3) { background: #28c840; }
.side h3 { margin: 14px 0 0; padding-left: 16px; font-size: 11px; line-height: 18px; font-weight: 600; color: #9c9da0; }
.side .lights + h3 { margin-top: 0; }
.side a { display: flex; align-items: center; height: 28px; margin: 0 10px; padding: 0 10px 0 8px; border-radius: 5px; }
.side a svg:first-child { width: 16px; height: 16px; margin-right: 6px; }
.side a span { flex: 1; min-width: 0; white-space: nowrap; }
.side .ej { width: 10px; height: 10px; color: #9a9b9d; }
.fav svg { color: #1681f5; }
.loc svg { color: #77787a; }
.pane { flex: 1; min-width: 0; display: flex; flex-direction: column; }
.tbar { height: 53px; flex: none; background: #f4f5f5; border-bottom: 1px solid #d8d8d8; display: flex; align-items: center; padding: 0 13px 0 22px; color: #5c5c5c; }
.tbar button { width: 40px; height: 28px; display: flex; align-items: center; justify-content: center; flex: none; border-radius: 6px; gap: 6px; }
.tbar svg { width: 20px; height: 19px; }
.tbar .nav { width: 10px; margin-right: 27px; color: #8c8c8c; }
.tbar .nav + .nav { margin-right: 19px; }
.tbar .nav svg { width: 10px; height: 16px; }
.tbar h2 { font-size: 15px; font-weight: 700; color: #4c4c4c; margin-right: auto; }
.tbar .hl { background: #e6e7e7; }
.tbar .sep { width: 1px; height: 20px; background: #ddd; }
.tbar .menu { width: 54px; }
.tbar .menu svg + svg { width: 10px; height: 8px; }
.tbar .gap { width: 32px; flex: none; }
.tbar .gap-s { width: 4px; flex: none; }
.find { width: 323px; height: 28px; border: 1px solid #e2e3e3; border-radius: 6px; display: flex; align-items: center; padding-left: 5px; gap: 6px; flex: none; margin-left: 32px; }
.tbar .find svg { width: 15px; height: 15px; }
.find input { flex: 1; font-size: 13px; }
.find input::placeholder { color: #b4b4b4; opacity: 1; }
.files { flex: 1; min-height: 0; overflow: auto; scrollbar-width: none; }
.files table { width: 100%; table-layout: fixed; border-collapse: separate; border-spacing: 0; padding: 0 11px 1px 10px; font-size: 13px; }
.files th { position: sticky; top: 0; z-index: 1; height: 27px; background: #fdfdfd; text-align: left; font-size: 11px; font-weight: 500; color: #7a7a7a; padding: 0 8px; border-bottom: 1px solid #e4e4e4; background-image: linear-gradient(#ddd, #ddd); background-size: 1px 19px; background-position: 0 3px; background-repeat: no-repeat; }
.files th:first-child { background-image: none; color: #222; font-weight: 600; padding-left: 37px; box-shadow: -10px 0 #fdfdfd; }
.files th:last-child { box-shadow: 11px 0 #fdfdfd; }
.files th .flex { display: flex; justify-content: space-between; align-items: center; }
.files th svg { width: 10px; height: 8px; color: #777; }
.files td { height: 20px; line-height: 20px; padding: 0 8px; white-space: nowrap; color: #7f7f7f; }
.files td:first-child { color: #262626; padding-left: 18px; border-radius: 5px 0 0 5px; }
.files td:last-child { border-radius: 0 5px 5px 0; }
.files td:nth-child(3) { text-align: right; }
.files .nm { display: flex; align-items: center; gap: 6px; }
.files .nm svg { width: 13px; height: 17px; }
.files tbody tr:nth-child(even) td { background: #f4f4f4; }
.files tbody tr.on td { background: #0262e3; color: #d5e5fb; border-radius: 0; background-image: linear-gradient(#2f7fea, #2f7fea); background-size: 100% 1px; background-position: 0 100%; background-repeat: no-repeat; }
.files tbody tr.on td:first-child { color: #fff; font-weight: 500; background-position: 30px 100%; }
.files tbody tr.on-last td, .files tbody tr.on-last td:first-child { background-image: none; }
.files tbody tr.on-first td:first-child { border-top-left-radius: 5px; }
.files tbody tr.on-first td:last-child { border-top-right-radius: 5px; }
.files tbody tr.on-last td:first-child { border-bottom-left-radius: 5px; }
.files tbody tr.on-last td:last-child { border-bottom-right-radius: 5px; }
.k1 { width: auto; } .k2 { width: 182px; } .k3 { width: 97px; } .k4 { width: 120px; }
.path { height: 28px; flex: none; border-top: 1px solid #ddd; display: flex; align-items: center; gap: 5px; padding-left: 12px; font-size: 11px; color: #858585; }
.path svg { width: 13px; height: 13px; }
.path a { display: flex; align-items: center; gap: 5px; }
.path em { font-style: normal; color: #666; }
.sbar { height: 28px; flex: none; border-top: 1px solid #cfcfcf; background: #f2f3f3; text-align: center; font-size: 12px; line-height: 27px; color: #727272; padding-right: 10px; }

.win-back .side { background: #dcdcdc; }
.win-back .lights i { background: #c6c6c6; border: 1px solid #aaa; }
.win-back .side a svg { opacity: .45; }
.win-back .cur { background: #c4c4c4; }
.win-back .tbar { background: #e8e8e8; color: #a2a2a2; }
.win-back .tbar h2 { color: #9e9e9e; }
.win-back .hl { background: #dadada; }
```
FILE: app.js
```js
const $ = id => document.getElementById(id);
const ic = (n, c = '') => `<svg class="${c}" aria-hidden="true"><use href="#${n}"/></svg>`;

// Bin tree: [level, name, state]
const tree = [
  [0, 'SC 501 GOLD REVISIONS COLLATED 16MAR18-AVID Script 5K', 'script'],
  [0, 'AA-SCRIPT SYNC'], [0, 'Z Generic - modified'],
  [0, 'ZBLOOPER DELETED SCENES FOR POP ETC'],
  [0, 'ZBLOOPERS DELETED SCENES AND FOR LIVE SHOW'],
  [0, 'ZCONFORM CHECKS'], [0, 'ZEPISODES', 'open'], [1, 'A-EDITORS CUTS'],
  ...['501 TREVOR+LAURIE', '502 PAUL+LAURIE', '503 TREVOR+JORDAN', '504 PAUL+JORDAN', '505 TREVOR+LAURIE',
    '506 PAUL+LAURIE', '507 TREVOR+JORDAN', '508 PAUL+JORDAN', '509 TREVOR+JORDAN', '510 PAUL+JORDAN'].map(n => [1, 'SC ' + n]),
  [1, 'SC 511 PAUL+JORDAN', 'open'], [2, 'SC 511 SC 06 RETRANSFER', 'bin']
];
$('tree').innerHTML = tree.map(([l, n, s]) => {
  const tri = s === 'script' || s === 'bin' ? '<svg class="tri"></svg>' : ic(s === 'open' ? 'tri-d' : 'tri-r', 'tri');
  const icon = { script: 'script', open: 'folder-o', bin: 'bin' }[s] || 'folder-s';
  return `<li class="l${l}">${tri}${ic(icon, 'ic')}<span>${n}</span>${s === 'bin' ? '<span class="size">162K</span>' : ''}</li>`;
}).join('');

// Audio clips
const clips = [['2/4', '11:20:01:04', '015'], ['3/1', '11:24:54:09', '016'], ['3/2', '11:32:46:21', '017'], ['3/3', '11:40:13:21', '018'],
  ['3/4', '11:44:51:03', '019'], ['3A/1', '11:55:34:14', '020'], ['3A/2', '12:00:29:05', '021'], ['3B/1', '12:27:18:00', '022'],
  ['3B/2', '12:33:37:16', '023'], ['3B/3', '12:40:23:23', '024'], ['3B/4', '12:42:00:01', '025'], ['3B/5', '12:47:28:19', '026'],
  ['3C/1', '12:59:44:10', '027'], ['3C/2', '13:06:19:05', '028'], ['3D/1', '13:14:34:06', '029'], ['4/1', '08:28:07:12', '002']];
$('cliprows').innerHTML = clips.map(([n, t, r]) =>
  `<tr class="${n === '3A/2' ? 'on' : ''}"><td><span class="chip ${n === '4/1' ? 'mag' : ''}"></span></td><td>${ic('wave')}</td><td>${n}</td><td>${t}</td><td>${t}</td><td>031${r}.WAV</td><td>031</td><td></td></tr>`).join('');
$('clips').scrollTop = 24;

// Transport buttons
const rows = [['step-b', 'step-f', 'brk-r', 'play', 'brk-l', '', 'marker', 'trim-l', 'trim-r'],
  ['step-b2', 'step-f2', 'brk-r-in', 'play-io', 'brk-l-in', 'quad', 'calc', 'scissors', 'lifter']];
$('transport').innerHTML = rows.map(r => '<div class="trow">' + r.map((n, i) =>
  `<button class="${i === 3 ? 'wide' : ''}${n === 'marker' ? 'mk-btn' : ''}" aria-label="${n || 'blank'}">${n ? ic(n, n === 'marker' ? 'mk' : '') : ''}</button>`).join('') + '</div>').join('');

// Timeline tools
const groups = [['arrow-r red hot', 'flag yel', 'scissors', 'lifter'], ['stack-link', 'in-out', 'in-out-b', 'film-split'],
  ['', 'flag', 'no-film', ''], ['sliders', 'film-tilt', 'title-t', 'dissolve'], ['film-in', 'slash-o', 'vee', 'curve pale hot'],
  ['boxx', '', 'arrow-r red hot', ''], ['', 'arrow-d yel', '', ''],
  ['#b32d0e', '#12a012', '#2412b8', '#cf5ba6'], ['#ececec', '', '#111', '']];
$('tools').innerHTML = `<div class="tgroup first"><button aria-label="Audio">${ic('speaker')}</button><div class="meter"><i></i><i></i></div><button aria-label="Track display">${ic('filmstack')}</button></div>` +
  groups.map(g => '<div class="tgroup">' + g.map(b => {
    if (b[0] === '#') return `<button aria-label="Marker" style="color:${b}">${ic('marker', 'mk')}</button>`;
    const [n, ...c] = b.split(' ');
    return `<button class="${c.join(' ')}" aria-label="${n || 'blank'}">${n ? ic(n) : ''}</button>`;
  }).join('') + '</div>').join('');

// Audio tracks
const levels = [['+12', 4], ['+6', 20], ['0', 37], ['-7', 52], ['-15', 67], ['-45', 85]];
$('tracks').insertAdjacentHTML('beforeend', [['A2', 77], ['A1', 89], ['A3', 84], ['A4', 75], ['A5', 69], ['A6', 74], ['A7', 73]].map(([n, h]) =>
  `<div class="track" style="height:${h}px"><div class="head">${n}${ic('spk-mini')}</div><button class="sm" aria-label="Solo ${n}">S</button><button class="sm" aria-label="Mute ${n}">M</button>` +
  `<div class="clip"><span class="name">4/1</span>${levels.map(([t, p]) => `<div class="lv" style="top:${p}%"><b>${t}</b></div>`).join('')}${ic('vol')}</div></div>`).join(''));

// Finder windows
const fav = [['airdrop', 'AirDrop'], ['clock', 'Recents'], ['apps', 'Applications'], ['doc', 'Documents'], ['folder', 'Avid Projects'],
  ['home', 'garyfluxgold'], ['desktop', 'Desktop'], ['download', 'Downloads'], ['folder', 'Creative Cloud Fil…']];
const loc = [['phone', 'iPhone'], ['tm', 'TM 8TB'], ['drive', 'THUNDERBOL…'], ['drive', 'Gary 02'], ['drive', 'GARY 2 TB'],
  ['drive', 'X4169955585'], ['drive', 'T4169955585'], ['drive', 'MyVolume']];
const tags = [['Red', '#fc1028'], ['Orange', '#f08208'], ['Yellow', '#ecbc0a'], ['Green', '#06c018'], ['Blue', '#0a78f5'], ['Purple', '#b03dd2'], ['Gray', '#737477']];
const side = cur => `<nav class="side"><div class="lights"><i></i><i></i><i></i></div><h3>Favorites</h3><div class="fav">${
  fav.map(([i, n]) => `<a href="#">${ic(i)}<span>${n}</span></a>`).join('')}</div><h3>iCloud</h3><h3>Locations</h3><div class="loc">${
  loc.map(([i, n]) => `<a href="#" class="${n === cur ? 'cur' : ''}">${ic(i)}<span>${n}</span>${ic('eject', 'ej')}</a>`).join('')}</div><h3>Tags</h3>${
  tags.map(([n, c]) => `<a href="#"><svg style="color:${c}" aria-hidden="true"><use href="#dot"/></svg><span>${n}</span></a>`).join('')}<a href="#">${ic('alltags')}<span>All Tags…</span></a></nav>`;
const bar = title => `<header class="tbar"><button class="nav" aria-label="Back">${ic('back')}</button><button class="nav" aria-label="Forward">${ic('fwd')}</button><h2>${title}</h2>` +
  `<button aria-label="Delete">${ic('trash')}</button><button aria-label="New folder">${ic('newfolder')}</button><i class="gap-s"></i><button aria-label="Icons">${ic('grid4')}</button><button class="hl" aria-label="List">${ic('list')}</button><button aria-label="Columns">${ic('cols')}</button><i class="sep"></i><button aria-label="Gallery">${ic('gallery')}</button><i class="gap"></i>` +
  `<button class="menu" aria-label="Group">${ic('group')}${ic('chev')}</button><button aria-label="Share">${ic('share')}</button><button aria-label="Tags">${ic('tag')}</button><button class="menu" aria-label="More">${ic('more')}${ic('chev')}</button>` +
  `<label class="find">${ic('search')}<input type="text" placeholder="Search" aria-label="Search ${title}"></label></header>`;

// [clip, first take, last take, id suffix, size, minute]
const files = [['019', 5, 7, '84', '32.2', 15], ['020', 1, 7, '85', '32', 15], ['021', 1, 7, '87', '30', 15], ['022', 1, 7, '88', '34.2', 15],
  ['023', 1, 7, '8A', '43.8', 15], ['024', 1, 7, '8D', '6.5', 15], ['025', 1, 7, '8D', '34.3', 15], ['026', 1, 7, '8F', '77.8', 15],
  ['027', 1, 7, '95', '41.2', 16], ['028', 1, 7, '98', '36.6', 16], ['029', 1, 5, '9A', '16.2', 16], ['030', 1, 7, '9A', '22.2', 16],
  ['031', 1, 7, '9B', '19.1', 16], ['032', 1, 2, '9C', '19.9', 16], ['032', 3, 7, '9D', '19.9', 16], ['033', 1, 3, '9D', '20', 16], ['033', 4, 6, '9E', '20', 16]];
let body = '';
for (const [clip, a, b, s, mb, min] of files)
  for (let t = a; t <= b; t++) {
    const cls = clip === '021' ? `on${t === 1 ? ' on-first' : ''}${t === 7 ? ' on-last' : ''}` : '';
    body += `<tr class="${cls}"><td><span class="nm">${ic('mxf')}031${clip}.WAVA0${t}.D70E5AE949${s}A.mxf</span></td><td>May 2, 2018 at 1:${min} AM</td><td>${mb} MB</td><td>MXF Media File</td></tr>`;
  }
$('winback').innerHTML = side('T4169955585') + `<div class="pane">${bar('T4169955585')}</div>`;
$('winfront').innerHTML = side('') + `<div class="pane">${bar('531')}<div class="files" id="files"><table><colgroup><col class="k1"><col class="k2"><col class="k3"><col class="k4"></colgroup>` +
  `<thead><tr><th><span class="flex">Name${ic('caret')}</span></th><th>Date Modified</th><th>Size</th><th>Kind</th></tr></thead><tbody>${body}</tbody></table></div>` +
  `<footer class="path"><a href="#">${ic('disk')}THUNDERBOLT 003</a><em>›</em><a href="#">${ic('bluefolder')}Avid MediaFiles</a><em>›</em><a href="#">${ic('bluefolder')}MXF</a><em>›</em><a href="#">${ic('bluefolder')}531</a></footer>` +
  `<div class="sbar">7 of 423 selected, 1.13 TB available</div></div>`;
$('files').scrollTop = 14;
```
